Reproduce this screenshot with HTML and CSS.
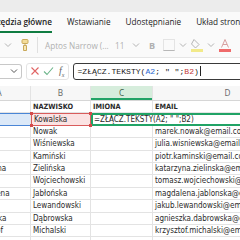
FILE: index.html
```html
<!DOCTYPE html>
<html>
  <head>
    <title>Arkusz</title>
    <link rel="stylesheet" href="styles.css">
  </head>
  <body>
    <div class="app">
      <div class="topstrip"></div>
      <nav class="tabs">
        <span class="tab active">Narzędzia główne</span>
        <span class="tab">Wstawianie</span>
        <span class="tab">Udostępnianie</span>
        <span class="tab">Układ strony</span>
      </nav>
      <div class="toolbar">
        <svg class="chev" width="8" height="6" viewBox="0 0 8 6"><path d="M1 1.5l3 3 3-3" fill="none" stroke="#b4b4b4" stroke-width="1"/></svg>
        <svg class="painter" width="8" height="12" viewBox="0 0 8 12"><rect x="1" y="0.5" width="6" height="4" rx="1" fill="#f3dc9a" stroke="#c9a95a"/><path d="M4 4.5v2M2.5 6.5h3v5h-3z" fill="#f7e7b8" stroke="#c9a95a"/></svg>
        <span class="sep"></span>
        <div class="fontbox">Aptos Narrow (...<svg width="8" height="6" viewBox="0 0 8 6"><path d="M1 1.5l3 3 3-3" fill="none" stroke="#b4b4b4"/></svg></div>
        <div class="sizebox">11<svg width="8" height="6" viewBox="0 0 8 6"><path d="M1 1.5l3 3 3-3" fill="none" stroke="#b4b4b4"/></svg></div>
        <span class="bold">B</span>
        <svg class="borders" width="12" height="12" viewBox="0 0 12 12"><rect x="0.5" y="0.5" width="11" height="11" fill="none" stroke="#cfcfcf" stroke-dasharray="1 1"/><path d="M0.5 11.5h11" stroke="#b8b8b8"/></svg>
        <svg class="chev" width="8" height="6" viewBox="0 0 8 6"><path d="M1 1.5l3 3 3-3" fill="none" stroke="#b4b4b4"/></svg>
        <svg class="fill" width="12" height="14" viewBox="0 0 12 14"><path d="M3 1.5l5 5-3.5 3.5-4-4z" fill="none" stroke="#b4b4b4"/><rect x="0" y="11" width="12" height="3" fill="#f2ea8a"/></svg>
        <svg class="chev" width="8" height="6" viewBox="0 0 8 6"><path d="M1 1.5l3 3 3-3" fill="none" stroke="#b4b4b4"/></svg>
        <svg class="color" width="12" height="14" viewBox="0 0 12 14"><path d="M2.5 9.5l3.5-8 3.5 8M4 6.5h4" fill="none" stroke="#d8a0a0"/><rect x="0" y="11" width="12" height="3" fill="#ef6b6b"/></svg>
      </div>
      <div class="formulabar">
        <div class="namebox"><svg width="8" height="6" viewBox="0 0 8 6"><path d="M1 1.5l3 3 3-3" fill="none" stroke="#555"/></svg></div>
        <div class="fxbox">
          <svg width="10" height="10" viewBox="0 0 10 10"><path d="M1.5 1.5l7 7M8.5 1.5l-7 7" stroke="#e06464" stroke-width="1.1"/></svg>
          <svg width="11" height="10" viewBox="0 0 11 10"><path d="M1 5.5l3 3 6-7" fill="none" stroke="#6cb58a" stroke-width="1.1"/></svg>
          <span class="fx">f<sub>x</sub></span>
        </div>
        <div class="input">=ZŁĄCZ.TEKSTY(<span class="ref-a">A2</span>; " ";<span class="ref-b">B2</span>)<span class="caret"></span></div>
      </div>
      <div class="sheet">
        <div class="row head">
          <div class="cell ca">A</div>
          <div class="cell cb">B</div>
          <div class="cell cc on">C</div>
          <div class="cell cd">D</div>
        </div>
        <div class="row">
          <div class="cell ca">IMIĘ</div>
          <div class="cell cb strong">NAZWISKO</div>
          <div class="cell cc strong">IMIONA</div>
          <div class="cell cd strong">EMAIL</div>
        </div>
        <div class="row">
          <div class="cell ca refa">Anna</div>
          <div class="cell cb refb">Kowalska<i class="h tl"></i><i class="h tr"></i><i class="h bl"></i><i class="h br"></i></div>
          <div class="cell editing">=ZŁĄCZ.TEKSTY(A2; " ";B2)</div>
        </div>
        <div class="row"><div class="cell ca">Marek</div><div class="cell cb">Nowak</div><div class="cell cc"></div><div class="cell cd">marek.nowak@email.com</div></div>
        <div class="row"><div class="cell ca">Julia</div><div class="cell cb">Wiśniewska</div><div class="cell cc"></div><div class="cell cd">julia.wisniewska@email.com</div></div>
        <div class="row"><div class="cell ca">Piotr</div><div class="cell cb">Kamiński</div><div class="cell cc"></div><div class="cell cd">piotr.kaminski@email.com</div></div>
        <div class="row"><div class="cell ca">Katarzyna</div><div class="cell cb">Zielińska</div><div class="cell cc"></div><div class="cell cd">katarzyna.zielinska@email.com</div></div>
        <div class="row"><div class="cell ca">Tomasz</div><div class="cell cb">Wojciechowski</div><div class="cell cc"></div><div class="cell cd">tomasz.wojciechowski@email.com</div></div>
        <div class="row"><div class="cell ca">Magdalena</div><div class="cell cb">Jabłońska</div><div class="cell cc"></div><div class="cell cd">magdalena.jablonska@email.com</div></div>
        <div class="row"><div class="cell ca">Jakub</div><div class="cell cb">Lewandowski</div><div class="cell cc"></div><div class="cell cd">jakub.lewandowski@email.com</div></div>
        <div class="row"><div class="cell ca">Agnieszka</div><div class="cell cb">Dąbrowska</div><div class="cell cc"></div><div class="cell cd">agnieszka.dabrowska@email.com</div></div>
        <div class="row"><div class="cell ca">Krzysztof</div><div class="cell cb">Michalski</div><div class="cell cc"></div><div class="cell cd">krzysztof.michalski@email.com</div></div>
        <div class="row"><div class="cell ca"></div><div class="cell cb"></div><div class="cell cc"></div><div class="cell cd"></div></div>
      </div>
    </div>
  </body>
</html>
```

FILE: styles.css
```css
html, body {
  margin: 0;
  width: 240px;
  height: 240px;
  overflow: hidden;
  background: #fff;
}
.app {
  display: flex;
  flex-direction: column;
  width: 240px;
  height: 240px;
  overflow: hidden;
  font-family: "Open Sans", sans-serif;
  color: #242424;
}
.topstrip {
  height: 12px;
  flex-shrink: 0;
  background: #ececec;
}
.tabs {
  display: flex;
  gap: 15px;
  height: 21px;
  flex-shrink: 0;
  margin-left: -18px;
  background: #fafafa;
  font-size: 8.2px;
  white-space: nowrap;
}
.tab {
  display: flex;
  align-items: center;
  height: 19px;
  border-bottom: 2px solid transparent;
}
.tab.active {
  font-weight: 600;
  border-bottom-color: #107c41;
}
.toolbar {
  display: flex;
  align-items: center;
  height: 24px;
  flex-shrink: 0;
  background: #fafafa;
  border-bottom: 1px solid #e6e6e6;
  color: #b0b0b0;
  font-size: 8.2px;
  white-space: nowrap;
}
.toolbar .chev {
  margin: 0 4px;
}
.toolbar .painter {
  margin: 0 6px 0 5px;
}
.sep {
  width: 1px;
  height: 16px;
  background: #e0e0e0;
  margin: 0 3px 0 2px;
}
.fontbox {
  display: flex;
  align-items: center;
  justify-content: space-between;
  width: 72px;
  height: 16px;
  padding: 0 3px 0 4px;
  margin-right: 4px;
  box-sizing: border-box;
}
.sizebox {
  display: flex;
  align-items: center;
  gap: 8px;
  width: 28px;
  margin-right: 6px;
  margin-left: -2px;
}
.bold {
  font-weight: 700;
  font-size: 9px;
  margin-right: 8px;
}
.formulabar {
  display: flex;
  align-items: center;
  gap: 4px;
  height: 22px;
  flex-shrink: 0;
  margin-top: 2px;
}
.namebox {
  display: flex;
  align-items: center;
  justify-content: flex-end;
  width: 24px;
  height: 15px;
  margin-left: -2px;
  padding-right: 3px;
  box-sizing: border-box;
  border: 1px solid #c8c8c8;
  border-left: none;
  border-radius: 0 3px 3px 0;
}
.fxbox {
  display: flex;
  align-items: center;
  gap: 3px;
  height: 15px;
  padding: 0 4px 0 3px;
  border: 1px solid #e4e4e4;
  border-radius: 3px;
}
.fx {
  font-family: "Liberation Serif", serif;
  font-style: italic;
  font-size: 10px;
  color: #666;
  margin-left: 2px;
}
.fx sub {
  font-size: 6px;
}
.input {
  display: flex;
  align-items: center;
  flex: 1;
  height: 15px;
  padding-left: 3px;
  margin-right: -6px;
  border: 1px solid #3a3a3a;
  border-radius: 3px;
  font-family: "Liberation Mono", monospace;
  font-size: 8.1px;
  color: #222;
  white-space: pre;
}
.ref-a { color: #2e6bd1; }
.ref-b { color: #c43c3c; }
.caret {
  width: 1px;
  height: 10px;
  background: #222;
  margin-left: 1px;
}
.sheet {
  margin-top: 4px;
  margin-left: -32px;
  font-family: "DejaVu Sans Condensed", "DejaVu Sans", sans-serif;
  font-stretch: condensed;
  font-size: 8px;
  color: #2a2a2a;
}
.row {
  display: flex;
  height: 12.4px;
}
.row.head {
  height: 14px;
  background: #f7f7f7;
  border-bottom: 1px solid #d6d6d6;
  font-family: "Open Sans", sans-serif;
  font-stretch: normal;
  font-size: 8.2px;
  color: #666;
}
.cell {
  position: relative;
  flex-shrink: 0;
  box-sizing: border-box;
  border-right: 1px solid #e3e3e3;
  border-bottom: 1px solid #e3e3e3;
  padding-left: 2px;
  line-height: 11.4px;
  white-space: nowrap;
  overflow: hidden;
}
.head .cell {
  display: flex;
  align-items: center;
  justify-content: center;
  padding: 0;
  border-bottom: none;
}
.ca { width: 63px; }
.cb { width: 60px; }
.cc { width: 62px; }
.cd { width: 150px; }
.head .on {
  background: #d6eddc;
  color: #3d5f48;
  box-shadow: inset 0 -2px 0 #21a366;
}
.strong {
  font-weight: 700;
  font-size: 7.3px;
}
.refa {
  background: #dce9f8;
  border-top: 1px solid #4a86d6;
  border-bottom: 1px solid #4a86d6;
  color: transparent;
}
.refb {
  overflow: visible;
  background: #fbe3e3;
  border: 1px solid #d95c5c;
  z-index: 1;
}
.h {
  position: absolute;
  width: 3px;
  height: 3px;
  background: #d24a4a;
}
.tl { left: -2px; top: -2px; }
.tr { right: -2px; top: -2px; }
.bl { left: -2px; bottom: -2px; }
.br { right: -2px; bottom: -2px; }
.editing {
  width: 212px;
  border: 2px solid #21a366;
  border-right: none;
  padding-left: 1px;
  line-height: 9px;
  background: #fff;
}
```
